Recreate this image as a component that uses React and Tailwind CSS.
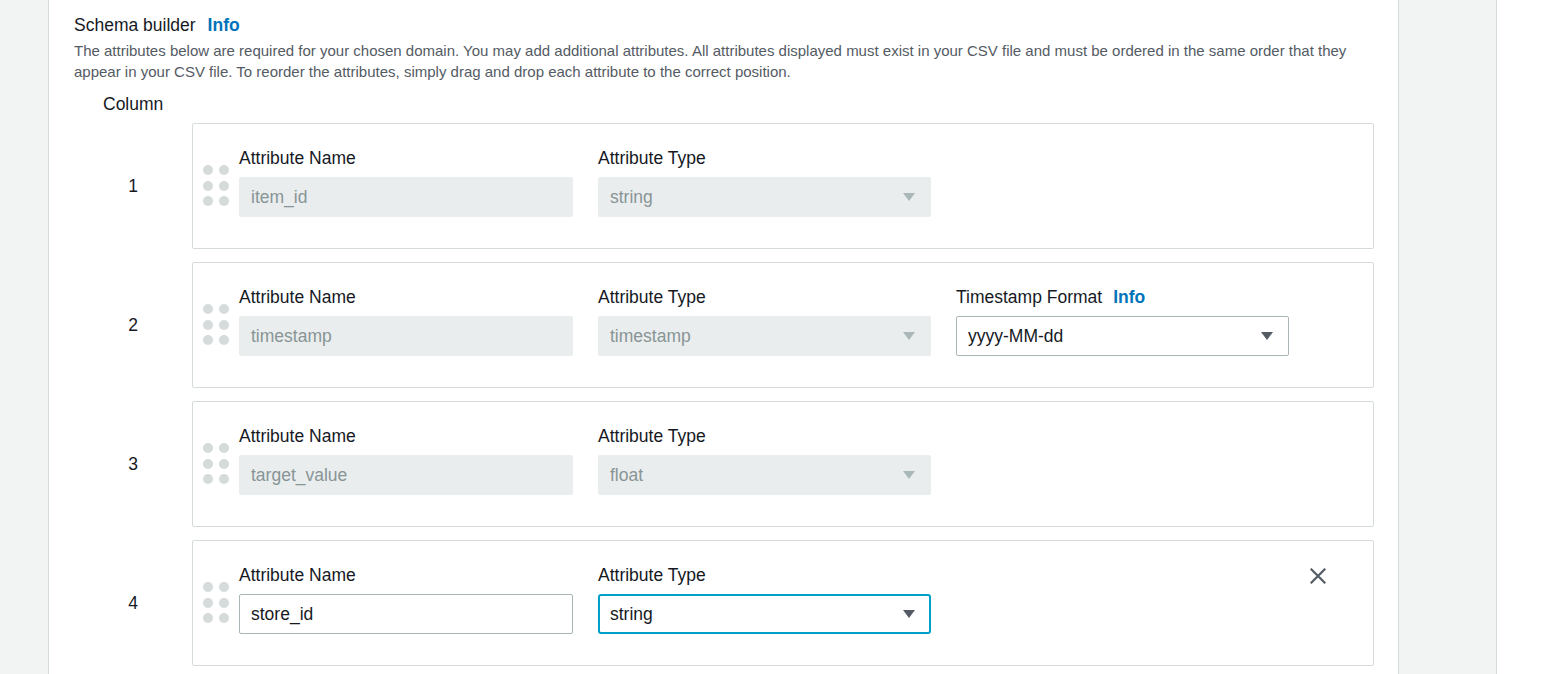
import React from "react";

const font = { fontFamily: '"Liberation Sans", Arial, sans-serif' };

function Dots() {
  return (
    <div className="ml-[10px] mr-[10px] mt-[17px] grid w-[26px] grid-cols-2 gap-x-[5px] gap-y-[5.5px] self-start">
      {[0, 1, 2, 3, 4, 5].map((i) => (
        <span key={i} className="h-[10px] w-[10px] rounded-full bg-[#d5dbdb]" />
      ))}
    </div>
  );
}

function Arrow({ color }) {
  return (
    <svg width="14" height="10" viewBox="0 0 14 10" className="shrink-0">
      <path d="M1 1 L13 1 L7 9 Z" fill={color} />
    </svg>
  );
}

function Field({ label, info, value, disabled, select, focused, width = "w-[334px]" }) {
  let box;
  if (disabled) {
    box = "bg-[#eaeded] text-[#879596] border border-[#eaeded]";
  } else if (focused) {
    box = "bg-white text-[#16191f] border-2 border-[#00a1c9] rounded-[3px]";
  } else {
    box = "bg-white text-[#16191f] border border-[#aab7b8]";
  }
  return (
    <div className={`flex flex-col ${width}`}>
      <div className="flex h-[20px] items-center gap-[11px] text-[17.5px] leading-[20px] text-[#16191f]">
        <span>{label}</span>
        {info && <span className="font-bold text-[#0073bb]">Info</span>}
      </div>
      <div
        className={`mt-[9px] flex h-[40px] items-center justify-between rounded-[2px] text-[17.5px] ${box} ${
          focused ? "pl-[10px] pr-[13px]" : "pl-[11px] pr-[14px]"
        }`}
      >
        <span>{value}</span>
        {select && <Arrow color={disabled ? "#aab7b8" : "#545b64"} />}
      </div>
    </div>
  );
}

function Row({ n, name, type, disabled = true, timestamp, removable, focused }) {
  return (
    <div className="flex items-center">
      <div className="ml-[29px] w-[60px] text-center text-[17.5px] text-[#16191f]">{n}</div>
      <div className="relative ml-[29px] flex h-[126px] w-[1182px] items-start rounded-[2px] border border-[#d5dbdb] bg-white pt-[24px]">
        <Dots />
        <div className="flex gap-[25px]">
          <Field label="Attribute Name" value={name} disabled={disabled} />
          <Field label="Attribute Type" value={type} disabled={disabled} select focused={focused} width="w-[333px]" />
          {timestamp && (
            <Field label="Timestamp Format" info value="yyyy-MM-dd" select width="w-[333px]" />
          )}
        </div>
        {removable && (
          <button className="absolute right-[47px] top-[27px] flex h-[16px] w-[16px] items-center justify-center">
            <svg width="16" height="16" viewBox="0 0 16 16">
              <path d="M1.5 1.5 L14.5 14.5 M14.5 1.5 L1.5 14.5" stroke="#545b64" strokeWidth="2.2" strokeLinecap="square" />
            </svg>
          </button>
        )}
      </div>
    </div>
  );
}

export default function App() {
  return (
    <div className="flex h-[674px] w-[1546px] overflow-hidden bg-white" style={font}>
      <div className="w-[48px] shrink-0 bg-[#f2f3f3]" />
      <div className="w-[1351px] shrink-0 border-x border-[#d5dbdb] bg-white pl-[25px] pr-[24px] pt-[14px]">
        <div className="flex items-center gap-[12px] text-[17.5px] leading-[22px] text-[#16191f]">
          <span>Schema builder</span>
          <span className="font-bold text-[#0073bb]">Info</span>
        </div>
        <p className="mt-[4px] text-[15px] leading-[21px] text-[#545b64]">
          The attributes below are required for your chosen domain. You may add additional attributes. All attributes displayed must exist in your CSV file and must be ordered in the same order that they appear in your CSV file. To reorder the attributes, simply drag and drop each attribute to the correct position.
        </p>
        <div className="mt-[11px] w-[60px] ml-[29px] text-center text-[17.5px] leading-[22px] text-[#16191f]">Column</div>
        <div className="mt-[8px] flex flex-col gap-[13px]">
          <Row n="1" name="item_id" type="string" />
          <Row n="2" name="timestamp" type="timestamp" timestamp />
          <Row n="3" name="target_value" type="float" />
          <Row n="4" name="store_id" type="string" disabled={false} removable focused />
        </div>
      </div>
      <div className="w-[98px] shrink-0 border-r border-[#d5dbdb] bg-[#f2f3f3]" />
      <div className="flex-1 bg-white" />
    </div>
  );
}
